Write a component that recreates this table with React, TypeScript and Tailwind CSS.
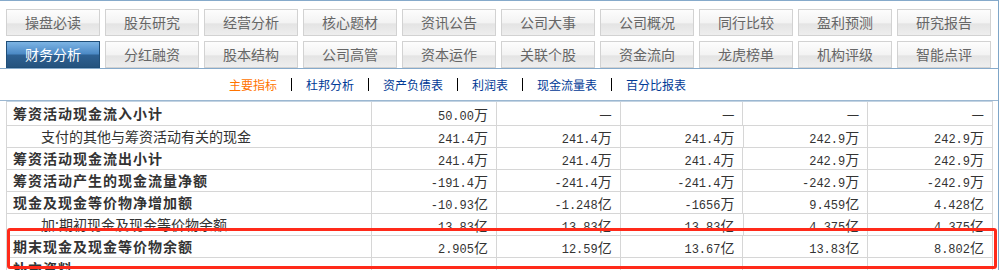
import React from 'react';

const tabRows = [
  ['操盘必读', '股东研究', '经营分析', '核心题材', '资讯公告', '公司大事', '公司概况', '同行比较', '盈利预测', '研究报告'],
  ['财务分析', '分红融资', '股本结构', '公司高管', '资本运作', '关联个股', '资金流向', '龙虎榜单', '机构评级', '智能点评'],
];

const subTabs = ['主要指标', '杜邦分析', '资产负债表', '利润表', '现金流量表', '百分比报表'];

interface Row {
  label: string;
  bold?: boolean;
  vals: string[];
}

const rows: Row[] = [
  { label: '筹资活动现金流入小计', bold: true, vals: ['50.00万', '—', '—', '—', '—'] },
  { label: '支付的其他与筹资活动有关的现金', vals: ['241.4万', '241.4万', '241.4万', '242.9万', '242.9万'] },
  { label: '筹资活动现金流出小计', bold: true, vals: ['241.4万', '241.4万', '241.4万', '242.9万', '242.9万'] },
  { label: '筹资活动产生的现金流量净额', bold: true, vals: ['-191.4万', '-241.4万', '-241.4万', '-242.9万', '-242.9万'] },
  { label: '现金及现金等价物净增加额', bold: true, vals: ['-10.93亿', '-1.248亿', '-1656万', '9.459亿', '4.428亿'] },
  { label: '加:期初现金及现金等价物余额', vals: ['13.83亿', '13.83亿', '13.83亿', '4.375亿', '4.375亿'] },
  { label: '期末现金及现金等价物余额', bold: true, vals: ['2.905亿', '12.59亿', '13.67亿', '13.83亿', '8.802亿'] },
  { label: '补充资料', bold: true, vals: ['', '', '', '', ''] },
  { label: '净利润', vals: ['', '', '', '', ''] },
];

const colWidths = ['w-[125px]', 'w-[124px]', 'w-[123px]', 'w-[125px]', 'w-[124px]'];

function Value({ v }: { v: string }) {
  if (v === '—') {
    return <span className="text-[14px]">—</span>;
  }
  const num = v.slice(0, -1);
  const unit = v.slice(-1);
  return (
    <span className="whitespace-nowrap">
      <span className="text-[12px] font-['Liberation_Mono',monospace]">{num}</span>
      <span className="text-[14px]">{unit}</span>
    </span>
  );
}

export default function App() {
  return (
    <div className="relative h-[270px] w-[1002px] overflow-hidden bg-white font-['Noto_Sans_CJK_SC',sans-serif] text-[#333]">
      <div className="w-[999px] border-r border-[#7fa6c8]">
        {/* top tabs */}
        <div className="flex flex-col gap-[5px] border-t border-b border-[#86aacb] pb-0 pl-[6px] pt-[8px]">
          {tabRows.map((row, ri) => (
            <div key={ri} className="flex gap-[5px]">
              {row.map((t) =>
                t === '财务分析' ? (
                  <div
                    key={t}
                    className="flex h-[27px] w-[94px] items-center justify-center border border-[#1f4e78] bg-[linear-gradient(#7db4e4,#4b89c5_48%,#2e6193_52%,#25537e)] text-[14px] text-white"
                  >
                    {t}
                  </div>
                ) : (
                  <div
                    key={t}
                    className="flex h-[27px] w-[94px] items-center justify-center border border-[#d2d2d2] bg-[linear-gradient(#fdfdfd,#f3f3f3_50%,#e4e4e4_56%,#eeeeee)] text-[14px] text-[#666]"
                  >
                    {t}
                  </div>
                )
              )}
            </div>
          ))}
        </div>

        {/* sub nav */}
        <div className="flex h-[32px] items-center border-b border-[#9bb7d1] pl-[229px] text-[12px]">
          {subTabs.map((t, i) => (
            <React.Fragment key={t}>
              {i > 0 && <span className="mx-[14px] h-[13px] w-px bg-black" />}
              <span className={i === 0 ? 'text-[#ff7400]' : 'text-[#003a96]'}>{t}</span>
            </React.Fragment>
          ))}
        </div>

        {/* table */}
        <div className="ml-[6px] w-[987px] border-t border-l border-r border-t-[#c3d3e2] border-l-[#d6d6d6] border-r-[#d6d6d6]">
          {rows.map((r, i) => (
            <div
              key={r.label}
              className={`flex border-b border-[#d6d6d6] ${i === 0 ? 'h-[24px]' : 'h-[22px]'}`}
            >
              <div
                className={`flex w-[366px] items-center border-r border-[#d6d6d6] text-[14px] ${
                  r.bold ? 'pl-[6px] font-bold tracking-[1px] text-[#333]' : 'pl-[34px] text-[#333]'
                }`}
              >
                {r.label}
              </div>
              {r.vals.map((v, j) => (
                <div
                  key={j}
                  className={`flex ${colWidths[j]} items-center justify-end pr-[8px] text-[#333] ${
                    j < 4 ? 'border-r border-[#d6d6d6]' : ''
                  }`}
                >
                  {v && <Value v={v} />}
                </div>
              ))}
            </div>
          ))}
        </div>
      </div>

      {/* highlight annotation */}
      <div className="pointer-events-none absolute left-[7px] top-[228px] h-[41px] w-[990px] rounded-[3px] border-[3px] border-[#ff2a1a]" />
    </div>
  );
}
